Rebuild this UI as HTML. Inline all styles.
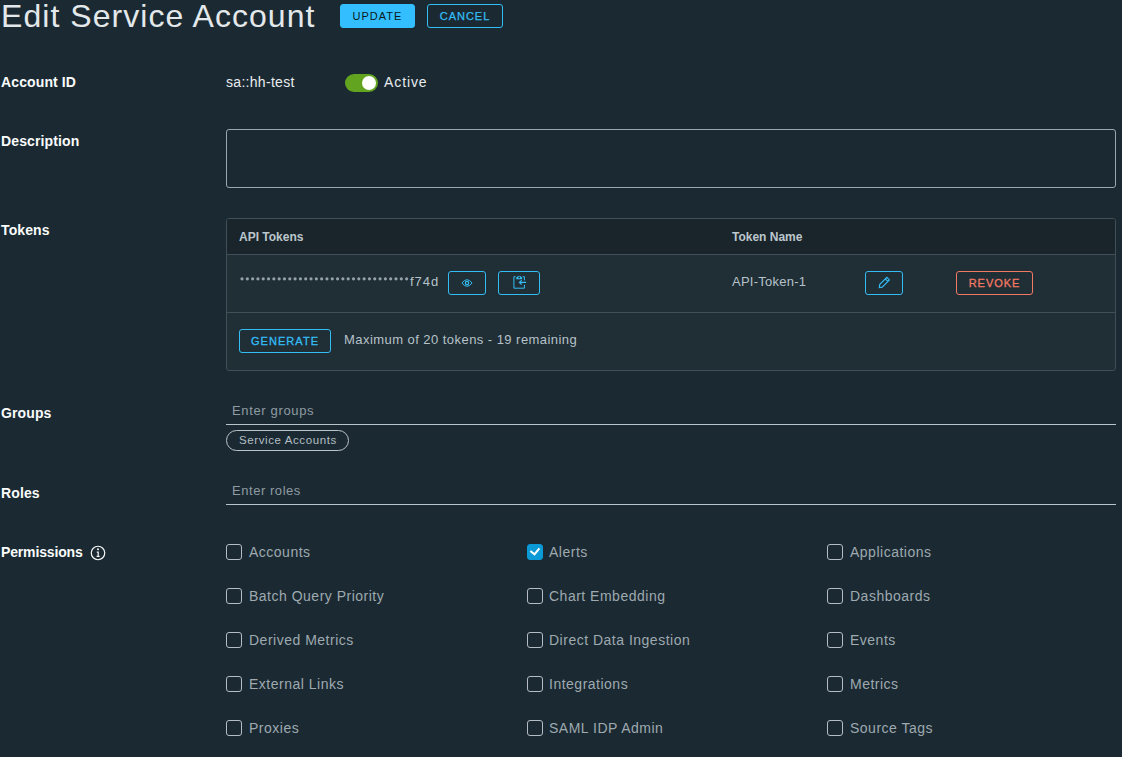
<!DOCTYPE html>
<html><head><meta charset="utf-8">
<style>
*{box-sizing:border-box;margin:0;padding:0}
html,body{width:1122px;height:757px;overflow:hidden;background:#1b2a32;font-family:"Liberation Sans",sans-serif}
.a{position:absolute;white-space:nowrap;line-height:1}
.h1{font-size:32px;color:#e3e8eb;letter-spacing:1.05px;left:1px;top:0px}
.lbl{font-size:14px;font-weight:700;color:#fafbfc;left:1px;letter-spacing:0.12px}
.btn{position:absolute;height:24px;border-radius:3px;border:1px solid #33bdf5;font-size:11px;letter-spacing:1px;text-align:center;line-height:22px;color:#33bdf5;-webkit-text-stroke:0.25px currentColor}
.btn.p{background:#33bfff;color:#0b1820;border-color:#33bfff;-webkit-text-stroke:0}
.btn.r{border-color:#f27963;color:#f27963;-webkit-text-stroke:0.3px currentColor;letter-spacing:0.95px}
.btn.b{-webkit-text-stroke:0.3px currentColor;letter-spacing:1.05px}
.val{font-size:14px;color:#e9ecef}
.ta{position:absolute;left:226px;top:129px;width:890px;height:59px;border:1px solid #9aa7ae;border-radius:3px}
.tbl{position:absolute;left:226px;top:218px;width:890px;height:153px;border:1px solid #404f58;border-radius:3px;background:#202e35;overflow:hidden}
.th{position:absolute;left:0;top:0;width:100%;height:36px;background:#1a252b;border-bottom:1px solid #404f58}
.tr1{position:absolute;left:0;top:93px;width:100%;height:1px;background:#404f58}
.th span{position:absolute;font-size:12px;font-weight:700;color:#bcc7cd;line-height:1}
.tt{font-size:13px;color:#b6c2c9}
.ib{position:absolute;height:24px;border:1px solid #33bdf5;border-radius:3px}
.ib svg{position:absolute;left:0;top:0}
.inp{position:absolute;left:226px;width:890px;height:1px;background:#b9c4ca}
.ph{font-size:13px;color:#8f9ba2}
.chip{position:absolute;left:226px;top:430px;width:123px;height:21px;border:1px solid #b9c4ca;border-radius:11px}
.cb{position:absolute;width:16px;height:16px;border:1px solid #b3bdc3;border-radius:3px}
.cb.on{background:#0b9ad6;border-color:#0b9ad6}
.cl{font-size:14px;color:#9ea9b0;letter-spacing:0.5px}
</style></head><body>
<div class="a h1">Edit Service Account</div>
<div class="btn p" style="left:340px;top:4px;width:75px">UPDATE</div>
<div class="btn" style="left:427px;top:4px;width:76px">CANCEL</div>

<div class="a lbl" style="top:75px">Account ID</div>
<div class="a val" style="left:226px;top:75px;letter-spacing:0.3px">sa::hh-test</div>
<div class="a" style="left:345px;top:74px;width:33px;height:18px;border-radius:9px;background:#62a420"></div>
<div class="a" style="left:362px;top:76px;width:14px;height:14px;border-radius:7px;background:#fff"></div>
<div class="a val" style="left:384px;top:75px;letter-spacing:0.9px">Active</div>

<div class="a lbl" style="top:134px">Description</div>
<div class="ta"></div>

<div class="a lbl" style="top:223px">Tokens</div>
<div class="tbl">
  <div class="th"><span style="left:12px;top:12px">API Tokens</span><span style="left:505px;top:12px">Token Name</span></div>
  <div class="tr1"></div>
</div>
<svg class="a" style="left:240px;top:271px" width="172" height="16" fill="#95a2aa"><circle cx="2.00" cy="7.8" r="1.6"/><circle cx="7.31" cy="7.8" r="1.6"/><circle cx="12.62" cy="7.8" r="1.6"/><circle cx="17.93" cy="7.8" r="1.6"/><circle cx="23.24" cy="7.8" r="1.6"/><circle cx="28.55" cy="7.8" r="1.6"/><circle cx="33.86" cy="7.8" r="1.6"/><circle cx="39.17" cy="7.8" r="1.6"/><circle cx="44.48" cy="7.8" r="1.6"/><circle cx="49.79" cy="7.8" r="1.6"/><circle cx="55.10" cy="7.8" r="1.6"/><circle cx="60.41" cy="7.8" r="1.6"/><circle cx="65.72" cy="7.8" r="1.6"/><circle cx="71.03" cy="7.8" r="1.6"/><circle cx="76.34" cy="7.8" r="1.6"/><circle cx="81.65" cy="7.8" r="1.6"/><circle cx="86.96" cy="7.8" r="1.6"/><circle cx="92.27" cy="7.8" r="1.6"/><circle cx="97.58" cy="7.8" r="1.6"/><circle cx="102.89" cy="7.8" r="1.6"/><circle cx="108.20" cy="7.8" r="1.6"/><circle cx="113.51" cy="7.8" r="1.6"/><circle cx="118.82" cy="7.8" r="1.6"/><circle cx="124.13" cy="7.8" r="1.6"/><circle cx="129.44" cy="7.8" r="1.6"/><circle cx="134.75" cy="7.8" r="1.6"/><circle cx="140.06" cy="7.8" r="1.6"/><circle cx="145.37" cy="7.8" r="1.6"/><circle cx="150.68" cy="7.8" r="1.6"/><circle cx="155.99" cy="7.8" r="1.6"/><circle cx="161.30" cy="7.8" r="1.6"/><circle cx="166.61" cy="7.8" r="1.6"/></svg><div class="a tt" style="left:410px;top:275px;font-size:13px;letter-spacing:1px">f74d</div>
<div class="ib" style="left:448px;top:271px;width:38px"><svg width="38" height="24" style="position:absolute;left:-1px;top:-1px" fill="none" stroke="#33bdf5" stroke-width="1.1"><path d="M13.9 12 Q19 5.4 24.1 12 Q19 18.6 13.9 12 Z" stroke-width="1"/><circle cx="19" cy="12" r="1.7" stroke-width="1.2"/></svg></div>
<div class="ib" style="left:498px;top:271px;width:42px"><svg width="42" height="24" style="position:absolute;left:-1px;top:-1px" fill="none" stroke="#33bdf5" stroke-width="1"><path d="M17.6 5.7 H15.9 V17.2 H26.4 V13.8 M26.4 9.4 V5.7 H24.7"/><path d="M18.2 8.2 H24.2 V6.8 Q21.2 2.6 18.2 6.8 Z" fill="#33bdf5" stroke="none"/><circle cx="21.2" cy="6.4" r="0.9" fill="#202e35" stroke="none"/><path d="M21.4 11.4 H28.2 M23.7 9.1 L21.4 11.4 L23.7 13.7" stroke-width="1.15"/></svg></div>
<div class="a tt" style="left:732px;top:275px;letter-spacing:0.25px">API-Token-1</div>
<div class="ib" style="left:865px;top:271px;width:38px"><svg width="38" height="24" style="position:absolute;left:-1px;top:-1px" fill="none" stroke="#33bdf5" stroke-width="1.1"><g transform="translate(19.1 11.7) rotate(-45)"><path d="M-6.8 0 L-4.5 -1.8 H5.7 V1.8 H-4.5 Z M3.5 -1.8 V1.8"/></g></svg></div>
<div class="btn r" style="left:956px;top:271px;width:77px">REVOKE</div>
<div class="btn b" style="left:239px;top:329px;width:92px">GENERATE</div>
<div class="a tt" style="left:344px;top:333px;letter-spacing:0.45px">Maximum of 20 tokens - 19 remaining</div>

<div class="a lbl" style="top:406px">Groups</div>
<div class="a ph" style="left:232px;top:404px;letter-spacing:0.65px">Enter groups</div>
<div class="inp" style="top:424px"></div>
<div class="chip"></div>
<div class="a" style="left:239px;top:434.5px;font-size:11.5px;color:#b3bec4;letter-spacing:0.6px">Service Accounts</div>

<div class="a lbl" style="top:486px">Roles</div>
<div class="a ph" style="left:232px;top:484px;letter-spacing:0.55px">Enter roles</div>
<div class="inp" style="top:504px"></div>

<div class="a lbl" style="top:545px;letter-spacing:-0.15px">Permissions</div>
<svg class="a" style="left:90px;top:545px" width="16" height="16" fill="none" stroke="#f4f6f8"><circle cx="8" cy="8" r="6.75" stroke-width="1.2"/><circle cx="8" cy="4.3" r="1" fill="#f4f6f8" stroke="none"/><path d="M6.8 7.2 H8.2 V11.2 M6.6 11.4 H9.6" stroke-width="1.2"/></svg>
<div class="cb" style="left:226px;top:544px"></div>
<div class="a cl" style="left:249px;top:545px">Accounts</div>
<div class="cb" style="left:226px;top:588px"></div>
<div class="a cl" style="left:249px;top:589px">Batch Query Priority</div>
<div class="cb" style="left:226px;top:632px"></div>
<div class="a cl" style="left:249px;top:633px">Derived Metrics</div>
<div class="cb" style="left:226px;top:676px"></div>
<div class="a cl" style="left:249px;top:677px">External Links</div>
<div class="cb" style="left:226px;top:720px"></div>
<div class="a cl" style="left:249px;top:721px">Proxies</div>
<div class="cb on" style="left:527px;top:544px"><svg width="16" height="16" style="position:absolute;left:-1px;top:-1px"><path d="M3.4 7 L7.5 10.3 L12.4 4.4" fill="none" stroke="#fff" stroke-width="2.1"/></svg></div>
<div class="a cl" style="left:549px;top:545px">Alerts</div>
<div class="cb" style="left:527px;top:588px"></div>
<div class="a cl" style="left:549px;top:589px">Chart Embedding</div>
<div class="cb" style="left:527px;top:632px"></div>
<div class="a cl" style="left:549px;top:633px">Direct Data Ingestion</div>
<div class="cb" style="left:527px;top:676px"></div>
<div class="a cl" style="left:549px;top:677px">Integrations</div>
<div class="cb" style="left:527px;top:720px"></div>
<div class="a cl" style="left:549px;top:721px">SAML IDP Admin</div>
<div class="cb" style="left:827px;top:544px"></div>
<div class="a cl" style="left:850px;top:545px">Applications</div>
<div class="cb" style="left:827px;top:588px"></div>
<div class="a cl" style="left:850px;top:589px">Dashboards</div>
<div class="cb" style="left:827px;top:632px"></div>
<div class="a cl" style="left:850px;top:633px">Events</div>
<div class="cb" style="left:827px;top:676px"></div>
<div class="a cl" style="left:850px;top:677px">Metrics</div>
<div class="cb" style="left:827px;top:720px"></div>
<div class="a cl" style="left:850px;top:721px">Source Tags</div>
</body></html>
